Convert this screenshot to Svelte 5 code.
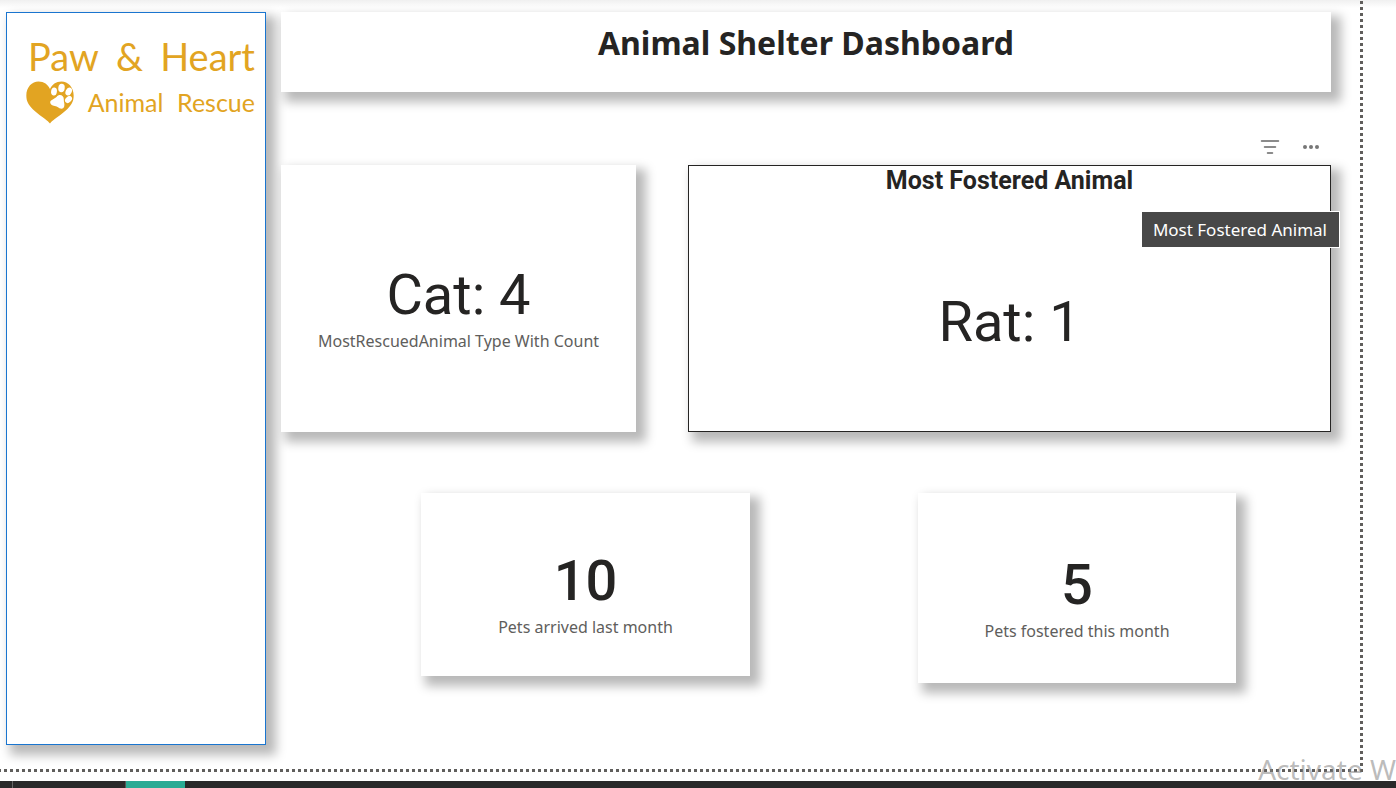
<script>
  const highlights = [
    { value: 'Cat: 4', label: 'MostRescuedAnimal Type With Count' }
  ];
  const monthly = [
    { value: '10', label: 'Pets arrived last month', size: 'short' },
    { value: '5', label: 'Pets fostered this month', size: 'tall' }
  ];
</script>

<div class="page">
  <div class="canvas">
    <aside class="panel sidebar">
      <div class="brand">
        <div class="brand-name"><span>Paw</span> <span>&amp;</span> <span>Heart</span></div>
        <div class="brand-sub">
          <svg viewBox="0 0 48 43" width="48" height="43" aria-hidden="true">
            <path fill="#e2a422" d="M24 42.500C20 37 4 30 0.800 19C-1.500 8 5 0.500 12.500 0.500C18 0.500 22 3.500 24 8C26 3.500 30 0.500 35.500 0.500C43 0.500 49.500 8 47.200 19C44 30 28 37 24 42.500Z" />
            <g fill="#fff">
              <ellipse cx="28" cy="10.500" rx="2.900" ry="4" transform="rotate(8 28 10.500)" />
              <ellipse cx="35.500" cy="7" rx="3.200" ry="4.200" transform="rotate(8 35.500 7)" />
              <ellipse cx="42.700" cy="10.500" rx="3" ry="4.200" transform="rotate(25 42.700 10.500)" />
              <ellipse cx="42.500" cy="18.500" rx="2.800" ry="4" transform="rotate(45 42.500 18.500)" />
              <path d="M30.500 16C33 12.500 38 14 37.800 18.500C37.500 21 39 22.500 38.200 25.500C37 29 33.500 27.500 31.500 26C29.500 24.500 26 25.500 24.500 22.500C23 19 28 18.500 30.500 16Z" />
            </g>
          </svg>
          <span>Animal</span> <span>Rescue</span>
        </div>
      </div>
    </aside>

    <main class="board">
      <header class="panel title"><h1>Animal Shelter Dashboard</h1></header>

      <div class="tools">
        <button type="button" aria-label="Filters">
          <svg viewBox="0 0 20 16" width="20" height="16" aria-hidden="true">
            <path d="M1.500 2H18.500M4.500 8H15.500M7.500 14H12.500" fill="none" stroke="#666" stroke-width="1.500" stroke-linecap="round" />
          </svg>
        </button>
        <button type="button" aria-label="More options">
          <svg viewBox="0 0 18 6" width="18" height="6" aria-hidden="true">
            <g fill="#777"><circle cx="3" cy="3" r="2" /><circle cx="9" cy="3" r="2" /><circle cx="15" cy="3" r="2" /></g>
          </svg>
        </button>
      </div>

      <div class="row highlights">
        {#each highlights as card}
          <section class="panel card">
            <div class="value">{card.value}</div>
            <div class="label">{card.label}</div>
          </section>
        {/each}
        <section class="panel card selected">
          <h2>Most Fostered Animal</h2>
          <div class="fill"><div class="value">Rat: 1</div></div>
          <div class="tooltip" role="tooltip">Most Fostered Animal</div>
        </section>
      </div>

      <div class="row monthly">
        {#each monthly as card}
          <section class="panel card {card.size}">
            <div class="value medium">{card.value}</div>
            <div class="label">{card.label}</div>
          </section>
        {/each}
      </div>
    </main>
  </div>

  <div class="watermark">Activate W</div>
  <footer class="taskbar"><span class="mark"></span><span class="active"></span></footer>
</div>

<style>
  :global(body) {
    margin: 0;
    background: #fff;
  }
  .page {
    position: relative;
    box-sizing: border-box;
    display: flex;
    flex-direction: column;
    min-height: 100vh;
    overflow: hidden;
    background: linear-gradient(#f0f0f0, #fff 8px);
    color: #252423;
    font-family: 'Noto Sans', 'Open Sans', sans-serif;
  }
  .canvas {
    flex: 1;
    box-sizing: border-box;
    display: flex;
    gap: 15px;
    margin-right: 33px;
    margin-bottom: 9px;
    padding: 12px 32px 27px 6px;
    background:
      linear-gradient(to right, #605e5c 3px, transparent 3px) 4px 100% / 6px 3px repeat-x,
      linear-gradient(#605e5c 3px, transparent 3px) 100% 1px / 3px 6px repeat-y;
  }
  .panel {
    box-sizing: border-box;
    background: #fff;
    box-shadow: 7px 7px 10px 3px rgba(0, 0, 0, 0.28);
  }
  .sidebar {
    flex: none;
    width: 260px;
    padding: 21px 10px 0 19px;
    border: 1px solid #1a75cf;
  }
  .brand {
    color: #e2a422;
    font-family: Lato, sans-serif;
  }
  .brand-name,
  .brand-sub {
    display: flex;
    align-items: center;
    justify-content: space-between;
  }
  .brand-name {
    padding-left: 2px;
    font-size: 38px;
    line-height: 44px;
  }
  .brand-sub {
    font-size: 25px;
    line-height: 48px;
  }
  .board {
    flex: 1;
    min-width: 0;
  }
  .title {
    height: 80px;
    text-align: center;
  }
  h1 {
    margin: 0;
    padding-top: 9px;
    font-size: 32px;
    line-height: 44px;
    font-weight: 700;
  }
  .tools {
    display: flex;
    justify-content: flex-end;
    gap: 5px;
    padding: 39px 2px 2px 0;
  }
  button {
    display: flex;
    align-items: center;
    justify-content: center;
    width: 36px;
    height: 32px;
    padding: 0;
    border: 0;
    background: #fff;
  }
  .row {
    display: grid;
    align-items: start;
  }
  .highlights {
    grid-template-columns: 355fr 643fr;
    gap: 52px;
  }
  .monthly {
    grid-template-columns: 329fr 318fr;
    gap: 168px;
    padding: 61px 95px 0 140px;
  }
  .card {
    position: relative;
    display: flex;
    flex-direction: column;
    align-items: center;
    justify-content: center;
    height: 267px;
    padding-top: 21px;
  }
  .short {
    height: 183px;
  }
  .tall {
    height: 190px;
  }
  .selected {
    padding-top: 0;
    border: 1px solid #252423;
  }
  .value {
    font-family: Roboto, sans-serif;
    font-size: 56px;
    line-height: 64px;
  }
  .medium {
    font-weight: 500;
  }
  .label {
    color: #605e5c;
    font-size: 16px;
    line-height: 28px;
  }
  h2 {
    margin: 0;
    font-family: Roboto, sans-serif;
    font-size: 25px;
    line-height: 30px;
    font-weight: 700;
  }
  .fill {
    flex: 1;
    display: flex;
    align-items: center;
    padding-top: 16px;
  }
  .tooltip {
    position: absolute;
    top: 45px;
    right: -10px;
    padding: 0 12px 0 11px;
    border: 1px solid #fff;
    background: #484848;
    color: #fff;
    font-size: 17px;
    line-height: 35px;
    white-space: nowrap;
  }
  .watermark {
    position: absolute;
    right: 0;
    bottom: 0;
    color: rgba(130, 130, 130, 0.55);
    font-size: 28px;
    line-height: 38px;
  }
  .taskbar {
    position: relative;
    display: flex;
    height: 7px;
    background: #292929;
  }
  .mark {
    width: 12px;
    margin-right: 112px;
    border-right: 1px solid #666;
  }
  .active {
    width: 59px;
    border-left: 1px solid #555;
    background: #2aab94;
  }
</style>
